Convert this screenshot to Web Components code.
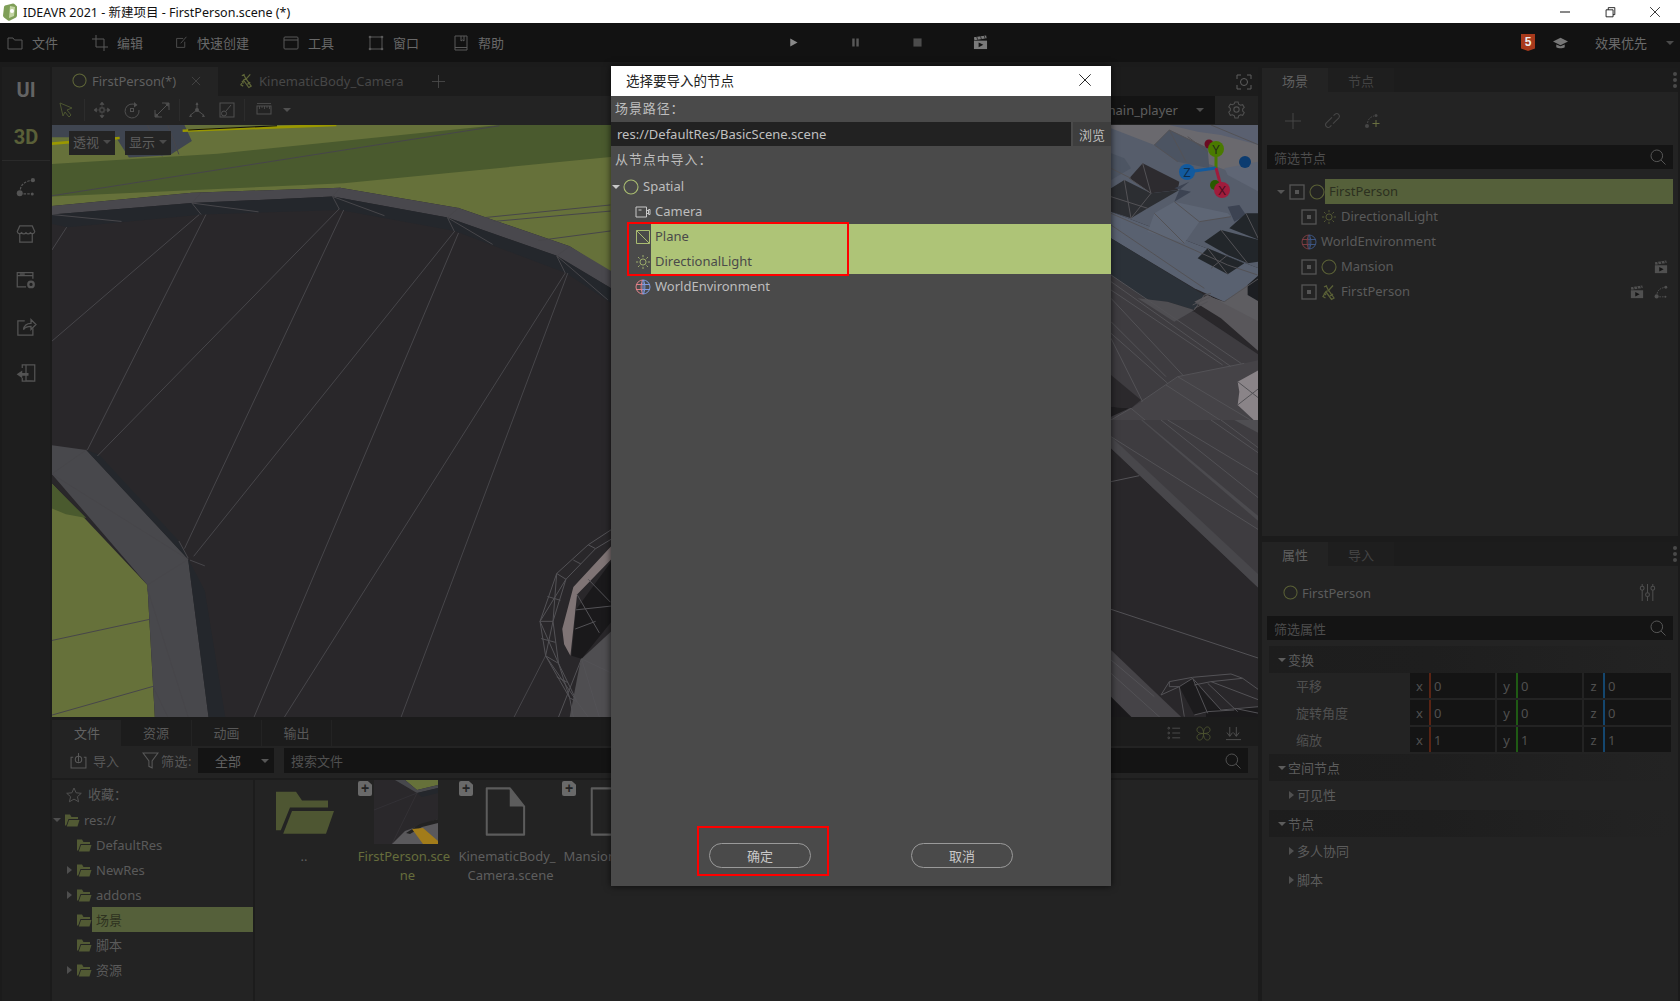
<!DOCTYPE html>
<html lang="zh">
<head>
<meta charset="utf-8">
<title>IDEAVR 2021</title>
<style>
  html, body { margin: 0; padding: 0; background: #1b1b1b; }
  body { width: 1680px; height: 1001px; overflow: hidden; }
</style>
</head>
<body>
<ide-app>
  <title-bar slot="title"></title-bar>
  <menu-bar slot="menu"></menu-bar>
  <side-rail slot="rail"></side-rail>
  <scene-tabs slot="center"></scene-tabs>
  <scene-tools slot="center"></scene-tools>
  <scene-view slot="center"></scene-view>
  <file-panel slot="center"></file-panel>
  <scene-panel slot="right"></scene-panel>
  <inspector-panel slot="right"></inspector-panel>
  <import-dialog slot="dialog"></import-dialog>
</ide-app>

<script>
// Iconos: todos en una caja de 16x16, con currentColor
const ICONS = {
  folderLine: '<path d="M1 3h5l1.5 2H15v9H1z" fill="none" stroke="currentColor"/>',
  crop: '<path d="M4 0v12h12M0 4h12v12" fill="none" stroke="currentColor"/>',
  editBox: '<path d="M10 3H2v11h10V7M7 9l7-8" fill="none" stroke="currentColor"/>',
  windowBox: '<rect x="1" y="2" width="14" height="12" rx="1" fill="none" stroke="currentColor"/><path d="M1 5h14" stroke="currentColor"/>',
  corners: '<rect x="2" y="2" width="12" height="12" fill="none" stroke="currentColor"/><g fill="currentColor"><circle cx="2" cy="2" r="1.3"/><circle cx="14" cy="2" r="1.3"/><circle cx="2" cy="14" r="1.3"/><circle cx="14" cy="14" r="1.3"/></g>',
  book: '<path d="M2 1h12v14H2zM2 12.5h12M8 1v5l1.5-1L11 6V1" fill="none" stroke="currentColor"/>',
  play: '<path d="M4 3l9 5-9 5z" fill="currentColor"/>',
  pause: '<path d="M4 3h3v10H4zM9 3h3v10H9z" fill="currentColor"/>',
  stop: '<rect x="3" y="3" width="10" height="10" fill="currentColor"/>',
  clapper: '<path d="M1 6h14v9H1z" fill="currentColor"/><path d="M1 2.500L14 .5l.5 3L1.500 5.500z" fill="currentColor"/><path d="M4 2l1 3M8 1.500l1 3M12 1l1 3" stroke="#141414" stroke-width=".8"/><path d="M6 8l5 2.500-5 2.500z" fill="#141414"/>',
  cap: '<path d="M8 3L0 7l8 4 8-4z" fill="currentColor"/><path d="M3.500 10v3c2 1.500 7 1.500 9 0v-3L8 12z" fill="currentColor"/>',
  circle: '<circle cx="8" cy="8" r="7" fill="none" stroke="currentColor" stroke-width="1.100"/>',
  camera: '<path d="M1 3h10.500v10H1zM11.500 7l2-1v4l-2-1M3.500 6h3" fill="none" stroke="currentColor"/><path d="M13.500 5.500h1.500v5h-1.500" fill="none" stroke="currentColor"/>',
  plane: '<path d="M1.500 1.500h13v13h-13zM1.500 1.500l13 13" fill="none" stroke="currentColor"/>',
  sun: '<circle cx="8" cy="8" r="3.500" fill="none" stroke="currentColor"/><path d="M8 0v2.500M8 13.500V16M0 8h2.500M13.500 8H16M2.300 2.300l1.800 1.800M11.900 11.900l1.800 1.800M2.300 13.700l1.800-1.800M11.900 4.100l1.800-1.800" stroke="currentColor"/>',
  globe: '<path d="M8 1a7 7 0 0 0 0 14c-2.500-2-2.500-12 0-14zM1 5.500h7M1 10.500h7" fill="none" stroke="var(--globe-l,#b5545c)"/><path d="M8 1a7 7 0 0 1 0 14c2.500-2 2.500-12 0-14zM8 5.500h7M8 10.500h7M8 1v14" fill="none" stroke="var(--globe-r,#4d6fb0)"/>',
  kine: '<path d="M5 1.500l2 4 6 8.500-2.500 1.500L5 8M12 1.500L8 6l-3 1.500-3 5 2.500 1.500M3 3l3-1.500M9 12l3-2M3 9l2 2" fill="none" stroke="currentColor" stroke-width="1.300"/>',
  boxDot: '<rect x="1" y="1" width="14" height="14" fill="none" stroke="currentColor" stroke-width="1.300"/><rect x="6" y="6" width="4" height="4" fill="currentColor"/>',
  plus: '<path d="M8 0v16M0 8h16" stroke="currentColor"/>',
  link: '<path d="M9 3.500l1.500-1.500a2.500 2.500 0 0 1 3.500 3.500L8.500 11M7 12.500L5.500 14a2.500 2.500 0 0 1-3.500-3.500L7.500 5" fill="none" stroke="currentColor"/>',
  addPath: '<circle cx="3" cy="13" r="2" fill="currentColor"/><circle cx="12" cy="2.500" r="1.500" fill="currentColor"/><path d="M3.500 10C4 6 7 3.500 10 3" fill="none" stroke="currentColor" stroke-dasharray="2 1"/><path d="M12 7v7M8.500 10.500h7" stroke="#6a7040"/>',
  path: '<circle cx="3" cy="13" r="2.400" fill="currentColor"/><circle cx="13.500" cy="2.500" r="1.700" fill="currentColor"/><circle cx="13" cy="13.500" r="1.200" fill="currentColor"/><path d="M3.500 10C4 6 7 4 11 3M6 13.500h5" fill="none" stroke="currentColor" stroke-dasharray="2 1"/>',
  shop: '<path d="M3 1.500h10l2 4.500a2 2 0 0 1-3.500 1 2.200 2.200 0 0 1-3.500 0 2.200 2.200 0 0 1-3.500 0A2 2 0 0 1 1 6zM3 8v6.500h10V8" fill="none" stroke="currentColor"/>',
  winGear: '<path d="M13.500 7V2H1v11.500h7M1 4.500h12.500M3 3.200h4" fill="none" stroke="currentColor"/><circle cx="12" cy="11.500" r="2.200" fill="none" stroke="currentColor" stroke-width="1.800"/>',
  share: '<path d="M7 3H1.500v11.500h12V9" fill="none" stroke="currentColor"/><path d="M6 10c.5-3.500 3-5 6-5V2l4 4-4 4V7.500c-2.500 0-4.500 .5-6 2.500z" fill="none" stroke="currentColor"/>',
  door: '<path d="M5 4V1.500h10v13H5V12M8 2v12l7 .5" fill="none" stroke="currentColor"/><path d="M.5 9L5 6v2h5v2.200H5v2z" fill="currentColor"/>',
  search: '<circle cx="6.800" cy="6.800" r="5.800" fill="none" stroke="currentColor"/><path d="M11 11l4.500 4.500" stroke="currentColor"/>',
  gear: '<path d="M6.500 1h3l.5 2 1.800 1 2-.5 1.500 2.500-1.500 1.500v2l1.500 1.500-1.500 2.500-2-.5-1.800 1-.5 2h-3l-.5-2-1.800-1-2 .5L.700 10.500 2.200 9V7L.700 5.500l1.500-2.500 2 .5 1.800-1z" fill="none" stroke="currentColor"/><circle cx="8" cy="8" r="2.500" fill="none" stroke="currentColor"/>',
  capture: '<path d="M1 5V1h4M11 1h4v4M15 11v4h-4M5 15H1v-4" fill="none" stroke="currentColor"/><circle cx="8" cy="8" r="3.500" fill="none" stroke="currentColor"/>',
  cursor: '<path d="M1 1l12 5-5 2 4 5-2 2-4-5-2 4z" fill="none" stroke="currentColor"/>',
  move: '<rect x="6" y="6" width="4" height="4" fill="none" stroke="currentColor"/><path d="M8 0l-2 2.500h4zM8 16l-2-2.500h4zM0 8l2.500-2v4zM16 8l-2.500-2v4zM8 2.500V6M8 10v3.500M2.500 8H6M10 8h3.500" fill="currentColor" stroke="currentColor" stroke-width=".6"/>',
  rotate: '<path d="M12 3.200A7 7 0 1 0 15 8" fill="none" stroke="currentColor"/><path d="M10 0l3.500 3L10 5.500z" fill="currentColor"/><rect x="6.500" y="6.500" width="3" height="3" fill="none" stroke="currentColor"/>',
  scale: '<path d="M8 1h7v7M1 8v7h7M15 1L1 15" fill="none" stroke="currentColor"/><path d="M15 1l-4 .5 3.500 3.500zM1 15l4-.5L1.500 11z" fill="currentColor"/>',
  axes: '<circle cx="8" cy="8" r="2" fill="currentColor"/><path d="M8 1v7L1.500 13M8 8l6.500 5" fill="none" stroke="currentColor"/><path d="M8 0L6.500 3h3zM0 15l3.200-.3-1.600-2.400zM16 15l-3.200-.3 1.600-2.400z" fill="currentColor"/>',
  snap: '<rect x="1" y="1" width="14" height="14" fill="none" stroke="currentColor"/><circle cx="5" cy="11.500" r="2.500" fill="none" stroke="currentColor"/><path d="M7 9l5-6" stroke="currentColor"/>',
  ruler: '<rect x="1" y="4" width="14" height="8" fill="none" stroke="currentColor"/><path d="M3.500 4v3M6 4v2M8.500 4v3M11 4v2M13.500 4v3M1 1.500h14" fill="none" stroke="currentColor" stroke-width=".8"/>',
  star: '<path d="M8 1l2.100 4.800 5.200.5-3.900 3.400 1.200 5.100L8 12.100l-4.600 2.700 1.200-5.100L.7 6.300l5.200-.5z" fill="none" stroke="currentColor"/>',
  importIn: '<path d="M3 5H1v10h14V5h-2" fill="none" stroke="currentColor"/><circle cx="8" cy="7" r="3" fill="none" stroke="currentColor"/><path d="M8 1v8" stroke="currentColor"/>',
  funnel: '<path d="M1 1h14L9.500 8.500V15l-3-1.500V8.500z" fill="none" stroke="currentColor"/>',
  list: '<path d="M6 2.500h9M6 8h9M6 13.500h9" stroke="currentColor"/><g fill="none" stroke="currentColor"><circle cx="2" cy="2.500" r="1"/><circle cx="2" cy="8" r="1"/><circle cx="2" cy="13.500" r="1"/></g>',
  clover: '<path d="M8 8C4 8 1 7 1 4s3-3 3-3 4 0 4 7c0-7 4-7 4-7s3 0 3 3-3 4-7 4c4 0 7 1 7 4s-3 3-3 3-4 0-4-7c0 7-4 7-4 7s-3 0-3-3 3-4 7-4z" fill="none" stroke="currentColor"/>',
  sortDown: '<path d="M4 1v10M1 7l3 4 3-4M11 1v10M8 7l3 4 3-4M0 14.500h16" fill="none" stroke="currentColor"/>',
  sliders: '<path d="M3 0v16M8 0v16M13 0v16" stroke="currentColor"/><g fill="#232323" stroke="currentColor"><circle cx="3" cy="4" r="1.800"/><circle cx="8" cy="10" r="1.800"/><circle cx="13" cy="4" r="1.800"/></g>',
  folder: '<path d="M1 2.500h5L7.500 5H14v2H4.500L2.200 13.500H1z" fill="currentColor"/><path d="M5 8h10.500l-2 6.500H2.800z" fill="currentColor"/>',
  file: '<path d="M2 1h8l5 5.500V15H2z" fill="none" stroke="currentColor" stroke-linejoin="round" stroke-width=".7"/><path d="M10 1l5 5.500h-5z" fill="currentColor"/>',
  close: '<path d="M1.500 1.500l13 13M14.500 1.500l-13 13" stroke="currentColor" stroke-width="1.100"/>',
  minimize: '<path d="M3 8h10" stroke="currentColor"/>',
  restore: '<path d="M3.500 5.500h8v8h-8zM6 5.500V3h7.500v8h-2" fill="none" stroke="currentColor"/>',
};

// Base: crea el shadow root a partir del markup estatico de cada clase
class ShadowEl extends HTMLElement {
  constructor() {
    super();
    this.attachShadow({ mode: 'open' }).innerHTML = this.constructor.markup;
  }
}

class IdeIcon extends HTMLElement {
  constructor() {
    super();
    this.attachShadow({ mode: 'open' });
  }
  connectedCallback() {
    const w = this.getAttribute('size') || 16;
    const h = this.getAttribute('height') || w;
    this.shadowRoot.innerHTML = `
      <style>:host { display: inline-flex; flex: none; } svg { display: block; overflow: visible; }</style>
      <svg width="${w}" height="${h}" viewBox="0 0 16 16" preserveAspectRatio="none">${ICONS[this.getAttribute('name')] || ''}</svg>`;
  }
}

class DropArrow extends ShadowEl {
  static markup = `<style>
    :host { display: inline-block; flex: none; width: 0; height: 0; border-style: solid; border-color: transparent;
      border-width: 4.500px 4.500px 0 4.500px; border-top-color: currentColor; }
    :host([right]) { border-width: 4.500px 0 4.500px 5px; border-left-color: currentColor; border-top-color: transparent; }
  </style>`;
}

class TreeRow extends HTMLElement {
  constructor() {
    super();
    this.attachShadow({ mode: 'open' }).innerHTML = `
      <style>
        :host { display: flex; height: var(--row-h, 25px); align-items: stretch; }
        .lead { flex: none; display: flex; align-items: center; position: relative; }
        .label { flex: 1; display: flex; align-items: center; padding: 0 0 var(--label-pb, 0) 4px; white-space: nowrap; min-width: 0; }
        :host([selected]) .label { background: var(--sel-bg); color: var(--sel-fg); }
        .trail { flex: none; display: flex; align-items: center; }
      </style>
      <div class="lead"><slot name="lead"></slot></div>
      <div class="label"><slot></slot></div>
      <div class="trail"><slot name="trail"></slot></div>`;
    this.shadowRoot.querySelector('.lead').style.width = (this.getAttribute('lead') || 0) + 'px';
  }
}

class IdeApp extends ShadowEl {
  static markup = `<style>
    :host { display: flex; flex-direction: column; width: 1680px; height: 1001px; background: #1b1b1b; position: relative;
      font: 13px 'Noto Sans', 'Noto Sans CJK SC', sans-serif; color: #606060; overflow: hidden; }
    .work { flex: 1; min-height: 0; display: flex; padding: 5px 2px 0 2px; }
    .center { width: 1206px; margin-left: 2px; display: flex; flex-direction: column; }
    .right { width: 416px; margin-left: 4px; display: flex; flex-direction: column; }
  </style>
  <slot name="title"></slot>
  <slot name="menu"></slot>
  <div class="work">
    <slot name="rail"></slot>
    <div class="center"><slot name="center"></slot></div>
    <div class="right"><slot name="right"></slot></div>
  </div>
  <slot name="dialog"></slot>`;
}

class TitleBar extends ShadowEl {
  static markup = `<style>
    :host { display: flex; align-items: center; height: 23px; background: #fff; color: #111; font-size: 12.500px; flex: none; }
    .logo { margin: 0 5px 0 2px; display: block; }
    .spacer { flex: 1; }
    .win { width: 45px; display: flex; justify-content: center; color: #111; }
  </style>
  <svg class="logo" width="16" height="18" viewBox="0 0 16 18"><path d="M2 4q0-1 1-1.500L11 .5q1 0 2 1l2 2v9q0 1-1 2l-6 3q-1 .5-2 0l-4-3q-1-1-1-2z" fill="#7f9f58"/><path d="M8 3l5 1-1 9-5 2z" fill="#c4d6a4"/><circle cx="10" cy="8" r="2" fill="#fff"/></svg>
  <span>IDEAVR 2021 - 新建项目 - FirstPerson.scene (*)</span>
  <span class="spacer"></span>
  <span class="win"><ide-icon name="minimize"></ide-icon></span>
  <span class="win"><ide-icon name="restore" size="14"></ide-icon></span>
  <span class="win"><ide-icon name="close" size="12"></ide-icon></span>
  <span style="width:3px"></span>`;
}

class MenuBar extends ShadowEl {
  static markup = `<style>
    :host { display: flex; align-items: center; height: 39px; background: #121212; color: #686868; padding-left: 7px; flex: none; }
    .left { display: flex; gap: 34px; width: 780px; }
    .item { display: flex; align-items: center; gap: 9px; }
    .item ide-icon { color: #585858; }
    .mid { display: flex; align-items: center; color: #585858; gap: 49px; }
    .right { margin-left: auto; display: flex; align-items: center; color: #6a6a6a; padding-right: 6px; }
    .html5 { width: 14px; height: 17px; background: #a83a1c; clip-path: polygon(0 0,100% 0,100% 85%,50% 100%,0 85%);
      color: #eee; font: bold 12px/16px 'Liberation Sans', sans-serif; text-align: center; }
  </style>
  <div class="left">
    <div class="item"><ide-icon name="folderLine"></ide-icon>文件</div>
    <div class="item"><ide-icon name="crop"></ide-icon>编辑</div>
    <div class="item" style="margin-left:-2px"><ide-icon name="editBox" size="13"></ide-icon>快速创建</div>
    <div class="item"><ide-icon name="windowBox"></ide-icon>工具</div>
    <div class="item"><ide-icon name="corners"></ide-icon>窗口</div>
    <div class="item"><ide-icon name="book"></ide-icon>帮助</div>
  </div>
  <div class="mid">
    <ide-icon name="play" size="13" style="color:#888"></ide-icon>
    <ide-icon name="pause" size="13"></ide-icon>
    <ide-icon name="stop" size="13" style="color:#4c4c4c"></ide-icon>
    <ide-icon name="clapper" size="15" style="color:#7a7a7a"></ide-icon>
  </div>
  <div class="right">
    <div class="html5">5</div>
    <ide-icon name="cap" size="15" style="margin:0 27px 0 18px;color:#777"></ide-icon>
    <span>效果优先</span>
    <drop-arrow style="margin-left:19px;color:#4a4a4a"></drop-arrow>
  </div>`;
}

class SideRail extends ShadowEl {
  static markup = `<style>
    :host { display: flex; flex-direction: column; width: 48px; background: #1e1e1e; flex: none; }
    .cell { height: 46.500px; display: flex; align-items: center; justify-content: center; color: #545454; }
    .big { font: bold 20px 'Roboto', sans-serif; color: #646464; }
    .olive { color: #5a6038; }
    hr { height: 1px; border: 0; margin: 0 0 3px; background: #2a2a2a; }
  </style>
  <div class="cell big">UI</div>
  <div class="cell big olive">3D</div>
  <hr>
  <div class="cell"><ide-icon name="path" size="20"></ide-icon></div>
  <div class="cell"><ide-icon name="shop" size="20"></ide-icon></div>
  <div class="cell"><ide-icon name="winGear" size="20"></ide-icon></div>
  <div class="cell"><ide-icon name="share" size="20"></ide-icon></div>
  <div class="cell"><ide-icon name="door" size="20"></ide-icon></div>`;
}

class SceneTabs extends ShadowEl {
  static markup = `<style>
    :host { display: flex; align-items: stretch; height: 29px; background: #1c1c1c; flex: none; }
    .tab { display: flex; align-items: center; padding-bottom: 2px; box-sizing: border-box; }
    .on { width: 166px; background: #232323; padding-left: 20px; color: #5f5f5f; gap: 5px; }
    .off { color: #474747; padding-left: 21px; gap: 5px; }
    .plus { margin-left: 28px; color: #4e4e4e; align-self: center; }
    .cap { margin-left: auto; margin-right: 6px; align-self: center; color: #5e5e5e; }
  </style>
  <div class="tab on"><ide-icon name="circle" size="15" style="color:#5f6638"></ide-icon>FirstPerson(*)<ide-icon name="close" size="10" style="margin-left:10px;color:#4e4e4e"></ide-icon></div>
  <div class="tab off"><ide-icon name="kine" size="15" style="color:#5f6638"></ide-icon>KinematicBody_Camera</div>
  <ide-icon class="plus" name="plus" size="13"></ide-icon>
  <ide-icon class="cap" name="capture"></ide-icon>`;
}

class SceneTools extends ShadowEl {
  static markup = `<style>
    :host { display: flex; align-items: center; height: 29px; background: #232323; color: #505050; flex: none; padding-bottom: 2px; box-sizing: border-box; }
    .b { width: 30px; display: flex; justify-content: center; }
    .sep { width: 1px; height: 22px; background: #2c2c2c; margin: 0 2px; }
    .player { margin-left: auto; width: 160px; height: 28px; box-sizing: border-box; background: #141414; display: flex; align-items: center;
      justify-content: flex-end; padding-right: 11px; color: #5e5e5e; gap: 18px; align-self: flex-start; }
    .gear { width: 43px; display: flex; justify-content: center; }
  </style>
  <div class="b"><ide-icon name="cursor" style="color:#4c5530"></ide-icon></div><span class="sep"></span>
  <div class="b"><ide-icon name="move"></ide-icon></div>
  <div class="b"><ide-icon name="rotate"></ide-icon></div>
  <div class="b"><ide-icon name="scale"></ide-icon></div><span class="sep"></span>
  <div class="b"><ide-icon name="axes"></ide-icon></div>
  <div class="b"><ide-icon name="snap"></ide-icon></div><span class="sep"></span>
  <div class="b" style="margin-left:2px"><ide-icon name="ruler"></ide-icon></div>
  <drop-arrow style="margin-left:4px"></drop-arrow>
  <div class="player">main_player<drop-arrow style="color:#4e4e4e"></drop-arrow></div>
  <div class="gear"><ide-icon name="gear" size="17"></ide-icon></div>`;
}

class SceneView extends ShadowEl {
  // Las coordenadas de cada grupo van en la escala de su recorte; el transform las lleva al visor
  static markup = `<style>
    :host { display: block; position: relative; height: 592px; flex: none; overflow: hidden; background: #29272a; }
    svg { position: absolute; left: 0; top: 0; display: block; }
    .btn { position: absolute; top: 6px; width: 46px; height: 24px; background: #242424; color: #5e5e5e; display: flex; align-items: center;
      justify-content: center; gap: 4px; box-sizing: border-box; padding-bottom: 3px; }
    drop-arrow { color: #4a4a4a; }
    .w { fill: none; stroke: #47464a; vector-effect: non-scaling-stroke; stroke-width: 1; }
    .wl { fill: none; stroke: #535256; vector-effect: non-scaling-stroke; stroke-width: 1; }
    text { font: 13px 'Noto Sans', sans-serif; fill: #24301a; text-anchor: middle; }
  </style>
  <svg width="1206" height="592" viewBox="52 125 1206 592">
    <rect x="52" y="125" width="1206" height="592" fill="#29272a"/>
    <g transform="translate(40 120) scale(.3704 .3827)">
      <path d="M32 13H1560V400H1543L1430 330 1130 230 810 177 410 190 32 225z" fill="#66713a"/>
      <path d="M32 115L480 88 1240 13H1560V95L820 165 32 200z" fill="#4a5a2e"/>
      <path d="M32 13H390L410 55 350 92 240 98 205 45H32z" fill="#3f4550"/>
      <path d="M32 62L215 47M385 28L800 13" fill="none" stroke="#9a9800" stroke-width="7"/>
      <path d="M400 26L640 15" fill="none" stroke="#111" stroke-width="3"/>
      <path d="M290 13L330 95M345 13L375 90" class="w"/>
      <path d="M32 225L410 190 810 177 1130 230 1430 330 1560 405V450L1395 355 1100 255 790 200 410 217 32 247z" fill="#49484d"/>
      <path d="M32 247L410 217 790 200 1100 255 1395 355 1560 450V490L1420 400 1120 290 810 235 440 247 75 280 32 272z" fill="#24272c"/>
      <path d="M32 247L220 265M410 217L590 240M790 200L930 250M1100 255L1222 325M1395 355L1533 470M410 217L435 190M790 200L810 177M1100 255L1130 230M1395 355L1430 330M410 217L435 247M790 200L808 233M1100 255L1118 290M1395 355L1418 400M32 198L1240 15M1200 255L1540 222M1225 265L1540 238M1345 315L1540 290" class="w"/>
      <path d="M32 950L290 1215 310 1560H32z" fill="#66713a"/>
      <path d="M32 950L125 1040 70 1030 32 1015z" fill="#4a5a2e"/>
      <path d="M32 1360L295 1305M32 1555L305 1480" class="w"/>
      <path d="M32 850L125 862 400 1148 455 1560H310L290 1215 32 925z" fill="#48484c"/>
      <path d="M125 862L160 875 375 1100 445 1230 500 1560H455L400 1148z" fill="#24272c"/>
      <path d="M32 925L400 1148M290 1215L400 1148M125 862L32 925M290 1225L400 1560M405 1150L445 1165M375 1100L400 1145M305 1480L345 1560" class="w"/>
      <path d="M32 578L430 247M128 862L448 247M155 878L808 232M390 1120L820 235M415 1140L1120 290M578 1560L1130 295M660 1560L1418 400M975 1560L1425 400M1280 1560L1365 1400M32 340L72 280" class="w"/>
      <path d="M1560 1320L1460 1410 1430 1560H1560z" fill="#4f4e51"/>
      <path d="M1410 1330L1440 1220 1560 1095V1130L1450 1240 1432 1400 1415 1370z" fill="#7f7475"/>
      <path d="M1435 1400L1447 1280 1560 1130V1290L1462 1408z" fill="#1a191b"/>
      <path d="M1543 1070L1480 1110 1395 1185 1350 1310 1365 1400 1430 1510 1440 1560M1543 1095L1500 1120 1420 1200 1385 1310 1400 1420 1450 1520 1480 1560M1480 1110L1500 1120M1395 1185L1420 1200M1350 1310L1385 1310M1365 1400L1400 1420M1430 1510L1450 1520M1370 1245L1405 1255M1353 1355L1392 1365M1395 1455L1425 1470M1440 1150L1460 1160M1395 1185L1385 1310M1420 1200L1350 1310M1350 1310L1400 1420M1385 1310L1365 1400M1365 1400L1450 1520M1400 1420L1430 1510" class="wl"/>
      <path d="M1462 1408L1510 1560M1462 1408L1400 1560M1462 1408L1543 1445M1447 1280L1543 1270M1445 1330L1500 1310M1450 1240L1510 1340M1480 1200L1540 1260" class="wl"/>
    </g>
    <!-- parte derecha del visor, arriba -->
    <g transform="translate(1111 125) scale(.3333)">
      <path d="M0 0H444V200L0 30z" fill="#6a696e"/>
      <path d="M0 10L130 60 444 170V430L0 260z" fill="#565d6b"/>
      <path d="M0 260L444 430V460L340 530 250 490 0 340z" fill="#596170"/>
      <path d="M280 510L340 530 444 455V600z" fill="#5e5d61"/>
      <path d="M130 60L175 15 290 70 295 130 200 110z" fill="#4c5462"/>
      <path d="M175 0H444V60L330 30 260 20z" fill="#5a6070"/>
      <path d="M340 130L444 110V200L350 150z" fill="#5f6675"/>
      <path d="M0 85L40 100 60 130 0 165z" fill="#4d5563"/>
      <path d="M55 160L95 115 205 170 200 195 120 205z" fill="#2d2b2f"/>
      <path d="M0 190L40 165 120 205 205 195 110 250 60 280 0 260z" fill="#2c2e32"/>
      <path d="M130 265L190 230 350 265 360 275 265 290 220 355 110 320z" fill="#5e6675"/>
      <path d="M190 190L235 170 205 195 190 230 240 200z" fill="#3c4352"/>
      <path d="M350 245L385 240 405 270 370 290z" fill="#3c4352"/>
      <path d="M355 310L405 265H444V345z" fill="#22262a"/>
      <path d="M280 350L330 315 444 345V410L410 415 350 390z" fill="#22262a"/>
      <path d="M260 400L290 370 400 415 350 448z" fill="#22262a"/>
      <path d="M410 480L444 450V530L410 510z" fill="#1c1e22"/>
      <path d="M0 340L280 510 250 555 170 530 0 530z" fill="#2b3138"/>
      <path d="M0 450L100 520 250 560 444 690V900H0z" fill="#3e3c40"/>
      <path d="M80 520L170 530 250 555 190 590z" fill="#4f4e52"/>
      <path d="M250 530L290 510 444 590V680L330 580z" fill="#59575b"/>
      <path d="M90 830L200 755 400 715 444 705V900H0V885L60 850z" fill="#454347"/>
      <path d="M380 770L444 735V900L380 840 385 800z" fill="#8a8488"/>
      <path d="M0 750L90 825 60 850 0 845z" fill="#2b292c"/>
      <path d="M0 845L55 850 0 875z" fill="#1f1e20"/>
      <path d="M0 265L250 375 350 420 440 450M0 300L280 490M340 530L444 460M250 555L280 510 300 505M245 540L300 515M250 550L290 530M0 130L60 160M55 160L120 205M95 115L120 205M120 205L60 280M40 165L60 280M0 215L110 250M130 265L220 355M190 230L265 290M265 290L360 275M130 60L175 15M175 15L225 110M175 15L290 70M200 110L130 60M230 35L290 80M300 0L444 60M330 315L410 415M290 370L350 448M350 390L300 430M405 265L444 345M380 770L444 820M380 840L444 790" class="wl"/>
      <path d="M0 450L390 715M0 470L360 725M0 495L335 720M0 520L215 750M0 590L165 755M0 625L170 775M0 640L95 830M90 830L200 755M200 755L444 900M165 780L350 900M60 850L120 900M200 755L400 715M0 885L60 850" class="wl"/>
    </g>
    <!-- parte derecha del visor, abajo -->
    <g transform="translate(1111 420) scale(.3333)">
      <path d="M0 0H444V505L0 85z" fill="#3e3c40"/>
      <path d="M0 85L444 505V465L0 50z" fill="#48474b"/>
      <path d="M370 0H444V40z" fill="#4f4e52"/>
      <path d="M95 0L444 290V305L90 0z" fill="#4c4b4f"/>
      <path d="M0 50L444 330M150 0L444 235M170 0L444 165M300 0L444 100M330 0L444 85M0 185L85 167M0 568L444 715" class="wl"/>
      <path d="M0 690L220 900H0z" fill="#454347"/>
      <path d="M0 830L70 900H0z" fill="#1a191b"/>
      <path d="M0 720L130 830M0 760L150 895" class="wl"/>
      <path d="M205 800L245 775 290 830 330 870 250 885z" fill="#1c1b1d"/>
      <path d="M285 870L444 860V900H285z" fill="#1a191b"/>
      <path d="M150 825L175 785 245 772 360 762 395 775 444 810M150 825L205 800 245 775 330 870 444 860M205 800L220 890M245 775L290 880M175 785L175 800 205 800M250 795L300 785 444 840M290 790L380 875M395 775L300 785M370 865L444 880M250 885L290 875 370 870" class="wl"/>
    </g>
    <path d="M1216 168L1216 149" stroke="#4a7a00" stroke-width="3"/>
    <path d="M1216 168L1187 172" stroke="#125a9e" stroke-width="3"/>
    <path d="M1216 168L1222 190" stroke="#a01c3c" stroke-width="3"/>
    <circle cx="1209" cy="144" r="4.500" fill="#6a0c22"/>
    <circle cx="1245" cy="162" r="6" fill="#0c3c70"/>
    <circle cx="1215" cy="185" r="5" fill="#2a5a00"/>
    <circle cx="1216" cy="149" r="8" fill="#4a7a00"/><text x="1216" y="154">Y</text>
    <circle cx="1187" cy="172" r="8" fill="#125a9e"/><text x="1187" y="177" style="fill:#0e2c4a">Z</text>
    <circle cx="1222" cy="190" r="8" fill="#a01c3c"/><text x="1222" y="195" style="fill:#4a0c1c">X</text>
  </svg>
  <div class="btn" style="left:17px">透视<drop-arrow></drop-arrow></div>
  <div class="btn" style="left:73px">显示<drop-arrow></drop-arrow></div>`;
}

class FilePanel extends ShadowEl {
  static markup = `<style>
    :host { display: flex; flex-direction: column; flex: 1; margin-top: 3px; background: #232323; min-height: 0; --sel-bg: #55603a; --sel-fg: #2e3220; }
    .tabs { display: flex; height: 26px; background: #1c1c1c; align-items: stretch; flex: none; }
    .tab { width: 70px; display: flex; align-items: center; justify-content: center; color: #585858; border-right: 1px solid #232323; box-sizing: border-box; padding-bottom: 2px; }
    .tab.on { background: #232323; color: #626262; }
    .views { margin-left: auto; display: flex; align-items: center; gap: 15px; padding-right: 17px; color: #505050; }
    .bar { display: flex; align-items: center; height: 32px; flex: none; color: #585858; padding-bottom: 3px; box-sizing: border-box; }
    .select { width: 76px; height: 25px; margin-left: 6px; background: #141414; display: flex; align-items: center; box-sizing: border-box; padding-left: 17px; gap: 20px; color: #626262; }
    .search { flex: 1; height: 25px; margin: 0 10px; background: #141414; display: flex; align-items: center; justify-content: space-between; padding: 0 7px; color: #505050; }
    .body { flex: 1; display: flex; border-top: 2px solid #1c1c1c; min-height: 0; }
    .tree { width: 201px; flex: none; padding-top: 2px; border-right: 2px solid #1c1c1c; box-sizing: content-box; color: #5a5a5a; }
    .tree drop-arrow { color: #4e4e4e; position: absolute; }
    ide-icon.fd { color: #525a34; position: absolute; }
    .files { flex: 1; display: flex; align-items: flex-start; }
    file-tile { flex: none; }
    .punct { font-family: 'Noto Sans CJK TC', sans-serif; }
    .l2 { padding-left: 7px; }
  </style>
  <div class="tabs">
    <div class="tab on" style="width:69px;padding-left:2px">文件</div><div class="tab" style="width:71px">资源</div><div class="tab">动画</div><div class="tab">输出</div>
    <div class="views"><ide-icon name="list" size="14"></ide-icon><ide-icon name="clover" size="15" style="color:#4c5230"></ide-icon><ide-icon name="sortDown" size="15"></ide-icon></div>
  </div>
  <div class="bar">
    <ide-icon name="importIn" size="17" style="margin-left:18px"></ide-icon><span style="margin-left:6px">导入</span>
    <ide-icon name="funnel" size="17" style="margin-left:23px"></ide-icon><span style="margin-left:2px;letter-spacing:.5px">筛选:</span>
    <div class="select">全部<drop-arrow style="color:#565656"></drop-arrow></div>
    <div class="search">搜索文件<ide-icon name="search"></ide-icon></div>
  </div>
  <div class="body">
    <div class="tree" style="--label-pb:0">
      <tree-row lead="32" style="--label-pb:2px"><ide-icon slot="lead" name="star" size="16" style="position:absolute;left:14px;color:#505050"></ide-icon><span>收藏<span class="punct">：</span></span></tree-row>
      <tree-row lead="28"><drop-arrow slot="lead" style="left:1px"></drop-arrow><ide-icon slot="lead" class="fd" name="folder" style="left:12px"></ide-icon>res://</tree-row>
      <tree-row lead="40"><ide-icon slot="lead" class="fd" name="folder" style="left:24px"></ide-icon>DefaultRes</tree-row>
      <tree-row lead="40"><drop-arrow slot="lead" right style="left:15px"></drop-arrow><ide-icon slot="lead" class="fd" name="folder" style="left:24px"></ide-icon>NewRes</tree-row>
      <tree-row lead="40"><drop-arrow slot="lead" right style="left:15px"></drop-arrow><ide-icon slot="lead" class="fd" name="folder" style="left:24px"></ide-icon>addons</tree-row>
      <tree-row lead="40" selected><ide-icon slot="lead" class="fd" name="folder" style="left:24px"></ide-icon>场景</tree-row>
      <tree-row lead="40"><ide-icon slot="lead" class="fd" name="folder" style="left:24px"></ide-icon>脚本</tree-row>
      <tree-row lead="40"><drop-arrow slot="lead" right style="left:15px"></drop-arrow><ide-icon slot="lead" class="fd" name="folder" style="left:24px"></ide-icon>资源</tree-row>
    </div>
    <div class="files">
      <file-tile style="width:98px">
        <ide-icon slot="art" name="folder" size="64" height="56" style="color:#4e5632;margin-top:3px"></ide-icon>
        ..
      </file-tile>
      <file-tile style="width:102px" plus="5" tone="olive">
        <svg slot="art" width="64" height="64" viewBox="0 0 64 64" style="margin-left:4px;display:block">
          <rect width="64" height="64" fill="#2a282b"/>
          <path d="M31 0H64V5L43 10z" fill="#66713a"/><path d="M21 0H31L43 10 64 5V8L43 13z" fill="#47484c"/><path d="M43 13L64 8V13L48 17z" fill="#24272c"/>
          <path d="M43 13L18 64M43 13L0 30" stroke="#333135" fill="none"/>
          <path d="M18 64L31 51 64 39V64z" fill="#5a595c"/><path d="M32 53L46 44 64 39V43L48 47 36 54z" fill="#222"/>
          <path d="M38 49L49 48 64 61V64H49z" fill="#a27c1a"/>
        </svg>
        FirstPerson.sce<br><span class="l2">ne</span>
      </file-tile>
      <file-tile style="width:104px" plus="4">
        <ide-icon slot="art" name="file" size="46" height="53" style="color:#5c5c5c;margin-top:5px;margin-left:-6px"></ide-icon>
        KinematicBody_<br><span class="l2">Camera.scene</span>
      </file-tile>
      <file-tile style="width:100px" plus="3">
        <ide-icon slot="art" name="file" size="46" height="53" style="color:#5c5c5c;margin-top:5px"></ide-icon>
        Mansion.scene
      </file-tile>
    </div>
  </div>`;
}

class FileTile extends ShadowEl {
  static markup = `<style>
    :host { display: block; position: relative; color: #5e5e5e; text-align: center; line-height: 19px; white-space: nowrap; }
    :host([tone="olive"]) { color: #666d3c; }
    .art { height: 65px; display: flex; justify-content: center; align-items: flex-start; }
    .text { padding-top: 2px; }
    .plus { display: none; position: absolute; top: 1px; width: 14px; height: 15px; border-radius: 2px; background: #6a6a6a; color: #232323;
      clip-path: polygon(0 0,70% 0,100% 25%,100% 100%,0 100%); font: bold 14px/15px 'Liberation Sans', sans-serif; text-align: center; }
    :host([plus]) .plus { display: block; }
  </style>
  <div class="plus">+</div>
  <div class="art"><slot name="art"></slot></div>
  <div class="text"><slot></slot></div>`;
  connectedCallback() {
    // La insignia queda a la izquierda de la miniatura
    this.shadowRoot.querySelector('.plus').style.left = (this.getAttribute('plus') || 0) + 'px';
  }
}

class PanelTabs extends HTMLElement {
  constructor() {
    super();
    const [a, b] = (this.getAttribute('tabs') || '').split(',');
    this.attachShadow({ mode: 'open' }).innerHTML = `
      <style>
        :host { display: flex; height: 24px; background: #1c1c1c; align-items: stretch; flex: none; }
        div { display: flex; align-items: center; justify-content: center; box-sizing: border-box; }
        .on { width: 66px; background: #232323; color: #606060; }
        .off { width: 66px; color: #444; background: #1e1e1e; }
        .dots { margin-left: auto; width: 6px; flex-direction: column; gap: 2px; }
        .dots i { width: 4px; height: 4px; border-radius: 50%; background: #4a4a4a; display: block; }
      </style>
      <div class="on">${a}</div><div class="off">${b}</div><div class="dots"><i></i><i></i><i></i></div>`;
  }
}

class SearchBox extends HTMLElement {
  constructor() {
    super();
    this.attachShadow({ mode: 'open' }).innerHTML = `
      <style>
        :host { display: flex; height: 24px; background: #141414; color: #4c4c4c; align-items: center; justify-content: space-between; padding: 0 7px; flex: none; }
      </style>
      <span>${this.getAttribute('placeholder')}</span><ide-icon name="search" style="color:#565656"></ide-icon>`;
  }
}

class ScenePanel extends ShadowEl {
  static markup = `<style>
    :host { display: flex; flex-direction: column; height: 468px; background: #232323; flex: none; margin-top: 1px; --sel-bg: #55603a; --sel-fg: #2c3020; --label-pb: 2px; color: #5a5a5a; }
    .tools { height: 53px; display: flex; align-items: center; padding: 4px 0 0 23px; gap: 23px; color: #464646; flex: none; box-sizing: border-box; }
    .inner { padding: 0 5px; display: flex; flex-direction: column; }
    .tree { padding-top: 10px; }
    .lead-abs { position: absolute; }
    .box { color: #555; }
    .ol { color: #5a6036; }
    .tr { color: #505050; margin-right: 3px; }
  </style>
  <panel-tabs tabs="场景,节点"></panel-tabs>
  <div class="tools"><ide-icon name="plus" size="16"></ide-icon><ide-icon name="link" size="17"></ide-icon><ide-icon name="addPath" size="16"></ide-icon></div>
  <div class="inner">
    <search-box placeholder="筛选节点"></search-box>
    <div class="tree">
      <tree-row lead="58" selected>
        <drop-arrow slot="lead" class="lead-abs" style="left:10px;color:#555"></drop-arrow>
        <ide-icon slot="lead" class="lead-abs box" name="boxDot" style="left:22px"></ide-icon>
        <ide-icon slot="lead" class="lead-abs ol" name="circle" style="left:42px"></ide-icon>
        FirstPerson
      </tree-row>
      <tree-row lead="70">
        <ide-icon slot="lead" class="lead-abs box" name="boxDot" style="left:34px"></ide-icon>
        <ide-icon slot="lead" class="lead-abs ol" name="sun" size="14" style="left:55px"></ide-icon>
        DirectionalLight
      </tree-row>
      <tree-row lead="50" style="--globe-l:#7a3c42;--globe-r:#3c5480">
        <ide-icon slot="lead" class="lead-abs" name="globe" style="left:34px"></ide-icon>
        WorldEnvironment
      </tree-row>
      <tree-row lead="70">
        <ide-icon slot="lead" class="lead-abs box" name="boxDot" style="left:34px"></ide-icon>
        <ide-icon slot="lead" class="lead-abs ol" name="circle" style="left:54px"></ide-icon>
        Mansion
        <ide-icon slot="trail" class="tr" name="clapper" size="14" style="margin-right:5px"></ide-icon>
      </tree-row>
      <tree-row lead="70">
        <ide-icon slot="lead" class="lead-abs box" name="boxDot" style="left:34px"></ide-icon>
        <ide-icon slot="lead" class="lead-abs ol" name="kine" style="left:54px"></ide-icon>
        FirstPerson
        <ide-icon slot="trail" class="tr" name="clapper" size="14" style="margin-right:10px"></ide-icon>
        <ide-icon slot="trail" class="tr" name="path" size="14" style="margin-right:5px"></ide-icon>
      </tree-row>
    </div>
  </div>`;
}

class PropSection extends HTMLElement {
  constructor() {
    super();
    this.attachShadow({ mode: 'open' }).innerHTML = `
      <style>
        :host { display: flex; align-items: center; gap: 2px; height: 27px; padding-left: 9px; margin: 0 2px;
          background: linear-gradient(90deg, #1d1d1d 0%, #1e1e1e 40%, #232323 100%); color: #5c5c5c; }
        drop-arrow { color: #5c5c5c; }
      </style>
      <drop-arrow></drop-arrow><span>${this.getAttribute('label')}</span>`;
  }
}

class PropGroup extends HTMLElement {
  constructor() {
    super();
    this.attachShadow({ mode: 'open' }).innerHTML = `
      <style>
        :host { display: flex; align-items: center; gap: 3px; padding: 0 0 2px 22px; color: #5c5c5c; height: var(--h, 29px); box-sizing: border-box; }
        drop-arrow { color: #505050; }
      </style>
      <drop-arrow right></drop-arrow><span>${this.getAttribute('label')}</span>`;
  }
}

class VecRow extends HTMLElement {
  constructor() {
    super();
    const v = (this.getAttribute('value') || '0,0,0').split(',');
    const cell = (axis, val, col) => `<div class="f"><span class="a">${axis}</span><i style="background:${col}"></i><span class="v">${val}</span></div>`;
    this.attachShadow({ mode: 'open' }).innerHTML = `
      <style>
        :host { display: flex; height: 25px; margin-bottom: 2px; color: #505050; align-items: center; }
        .l { width: 143px; flex: none; text-align: left; padding-left: 29px; box-sizing: border-box; }
        .fs { display: grid; grid-template-columns: 85px 85px 87px; gap: 2px; }
        .f { height: 25px; background: #141414; display: flex; align-items: stretch; color: #505050; }
        .a { width: 19px; display: flex; align-items: center; justify-content: center; }
        i { width: 2px; display: block; }
        .v { display: flex; align-items: center; padding-left: 3px; }
      </style>
      <div class="l">${this.getAttribute('label')}</div>
      <div class="fs">${cell('x', v[0], '#5a2414')}${cell('y', v[1], '#1f5a14')}${cell('z', v[2], '#14466e')}</div>`;
  }
}

class InspectorPanel extends ShadowEl {
  static markup = `<style>
    :host { display: flex; flex-direction: column; flex: 1; background: #232323; margin-top: 6px; min-height: 0; color: #5c5c5c; }
    .head { height: 50px; display: flex; align-items: center; padding: 3px 22px 0 21px; gap: 4px; flex: none; box-sizing: border-box; }
    .head .end { margin-left: auto; color: #4e4e4e; }
    .inner { padding: 0 5px; display: flex; flex-direction: column; }
  </style>
  <panel-tabs tabs="属性,导入"></panel-tabs>
  <div class="head"><ide-icon name="circle" size="15" style="color:#5a6036"></ide-icon><span>FirstPerson</span><ide-icon class="end" name="sliders" size="17"></ide-icon></div>
  <div class="inner">
    <search-box placeholder="筛选属性"></search-box>
    <div style="height:6px"></div>
    <prop-section label="变换"></prop-section>
    <vec-row label="平移" value="0,0,0"></vec-row>
    <vec-row label="旋转角度" value="0,0,0"></vec-row>
    <vec-row label="缩放" value="1,1,1"></vec-row>
    <prop-section label="空间节点"></prop-section>
    <prop-group label="可见性"></prop-group>
    <prop-section label="节点"></prop-section>
    <prop-group label="多人协同"></prop-group>
    <prop-group label="脚本"></prop-group>
  </div>`;
}

class ImportDialog extends ShadowEl {
  static markup = `<style>
    :host { position: absolute; left: 611px; top: 66px; width: 500px; height: 820px; background: #4a4a4a; display: flex; flex-direction: column;
      box-shadow: 0 0 7px rgba(0,0,0,.7); color: #bdbdbd; --sel-bg: #aec477; --sel-fg: #4a4a4a; --label-pb: 2px; }
    .head { height: 30px; background: #fff; color: #222; display: flex; align-items: center; padding: 0 19px 2px 15px; font-size: 13.500px; justify-content: space-between; flex: none; box-sizing: border-box; }
    .lab { display: flex; align-items: center; padding: 0 0 4px 4px; flex: none; letter-spacing: .9px; box-sizing: border-box; }
    .punct { font-family: 'Noto Sans CJK TC', sans-serif; }
    .path { display: flex; height: 24px; flex: none; }
    .input { flex: 1; background: #222; display: flex; align-items: center; padding-left: 6px; color: #c0c0c0; }
    .browse { width: 38px; margin-left: 2px; background: #3e3e3e; display: flex; align-items: center; justify-content: center; }
    .rows { flex: 1; }
    .lead-abs { position: absolute; }
    .ol { color: #a9bc70; }
    .foot { display: flex; gap: 100px; padding: 0 0 18px 98px; flex: none; }
    button { width: 102px; height: 25px; border: 1px solid #9a9a9a; border-radius: 13px; background: transparent; color: #c8c8c8;
      font: inherit; padding: 0; box-sizing: border-box; }
    .mark { position: absolute; border: 2px solid #f00; box-sizing: border-box; pointer-events: none; }
  </style>
  <div class="head"><span>选择要导入的节点</span><ide-icon name="close" size="14" style="color:#222"></ide-icon></div>
  <div class="lab" style="height:26px"><span>场景路径<span class="punct">：</span></span></div>
  <div class="path"><div class="input">res://DefaultRes/BasicScene.scene</div><div class="browse">浏览</div></div>
  <div class="lab" style="height:28px"><span>从节点中导入<span class="punct">：</span></span></div>
  <div class="rows">
    <tree-row lead="28">
      <drop-arrow slot="lead" class="lead-abs" style="left:1px;color:#c8c8c8"></drop-arrow>
      <ide-icon slot="lead" class="lead-abs ol" name="circle" style="left:12px"></ide-icon>
      Spatial
    </tree-row>
    <tree-row lead="40"><ide-icon slot="lead" class="lead-abs" name="camera" style="left:24px;color:#c8c8c8"></ide-icon>Camera</tree-row>
    <tree-row lead="40" selected><ide-icon slot="lead" class="lead-abs ol" name="plane" style="left:24px"></ide-icon>Plane</tree-row>
    <tree-row lead="40" selected><ide-icon slot="lead" class="lead-abs ol" name="sun" size="14" style="left:25px"></ide-icon>DirectionalLight</tree-row>
    <tree-row lead="40"><ide-icon slot="lead" class="lead-abs" name="globe" style="left:24px;--globe-l:#e08088;--globe-r:#7e9ae0"></ide-icon>WorldEnvironment</tree-row>
  </div>
  <div class="foot"><button>确定</button><button>取消</button></div>
  <div class="mark" style="left:16px;top:156px;width:222px;height:54px"></div>
  <div class="mark" style="left:86px;top:760px;width:132px;height:50px"></div>`;
}

customElements.define('ide-icon', IdeIcon);
customElements.define('drop-arrow', DropArrow);
customElements.define('tree-row', TreeRow);
customElements.define('ide-app', IdeApp);
customElements.define('title-bar', TitleBar);
customElements.define('menu-bar', MenuBar);
customElements.define('side-rail', SideRail);
customElements.define('scene-tabs', SceneTabs);
customElements.define('scene-tools', SceneTools);
customElements.define('scene-view', SceneView);
customElements.define('file-tile', FileTile);
customElements.define('file-panel', FilePanel);
customElements.define('panel-tabs', PanelTabs);
customElements.define('search-box', SearchBox);
customElements.define('scene-panel', ScenePanel);
customElements.define('prop-section', PropSection);
customElements.define('prop-group', PropGroup);
customElements.define('vec-row', VecRow);
customElements.define('inspector-panel', InspectorPanel);
customElements.define('import-dialog', ImportDialog);
</script>
</body>
</html>
